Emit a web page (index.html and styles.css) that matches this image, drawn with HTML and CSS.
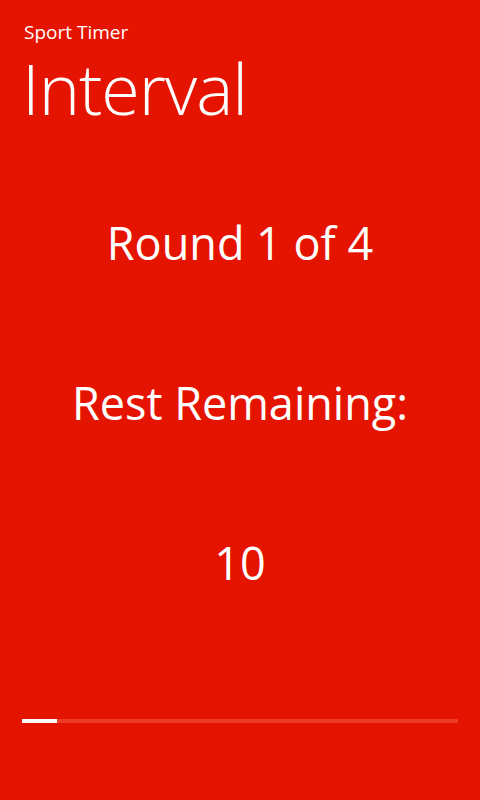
FILE: index.html
```html
<!DOCTYPE html>
<html lang="en">
<head>
    <meta charset="UTF-8">
    <meta name="viewport" content="width=device-width, initial-scale=1.0">
    <link rel="stylesheet" href="styles.css">
    <title>Sport Timer</title>
</head>
<body>
    <div class="page">
        <header class="title-panel">
            <div class="app-name">Sport Timer</div>
            <h1 class="page-title">Interval</h1>
        </header>

        <main class="timer">
            <div class="timer-line">Round 1 of 4</div>
            <div class="timer-line">Rest Remaining:</div>
            <div class="timer-line">10</div>
        </main>

        <div class="progress">
            <div class="progress-fill" style="width: 8%"></div>
        </div>
    </div>
</body>
</html>
```

FILE: styles.css
```css
html, body {
    margin: 0;
    height: 100%;
}

body {
    background-color: #e51400;
    color: #ffffff;
    font-family: "Open Sans", "Noto Sans", sans-serif;
}

.page {
    display: flex;
    flex-direction: column;
    height: 800px;
    box-sizing: border-box;
    padding: 0 22px;
}

.title-panel {
    padding-top: 21px;
}

.app-name {
    font-size: 19px;
    line-height: 22px;
    padding-left: 2px;
}

.page-title {
    margin: 9px 0 0;
    font-size: 70px;
    font-weight: 300;
    line-height: 72px;
    letter-spacing: -1px;
}

.timer {
    display: flex;
    flex-direction: column;
    align-items: center;
    gap: 96px;
    padding-top: 87px;
}

.timer-line {
    font-size: 45px;
    line-height: 64px;
}

.progress {
    margin-top: auto;
    margin-bottom: 77px;
    height: 4px;
    background-color: #ef3a24;
}

.progress-fill {
    height: 100%;
    background-color: #ffffff;
}
```
